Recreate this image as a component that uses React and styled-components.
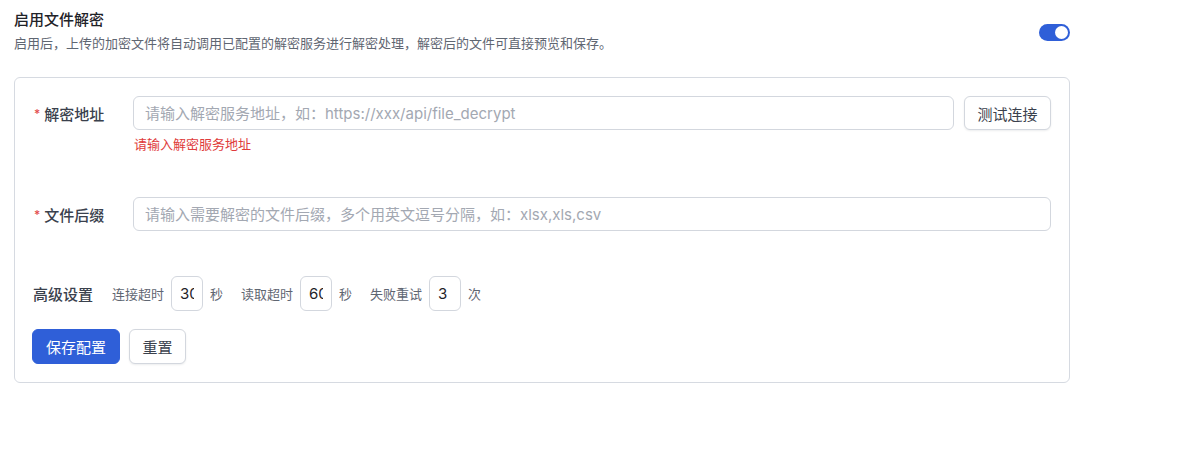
import React, { useState } from 'react';
import styled, { createGlobalStyle } from 'styled-components';

const GlobalStyle = createGlobalStyle`
  body {
    margin: 0;
    background: #ffffff;
    font-family: Inter, "Noto Sans CJK SC", sans-serif;
    color: #1f2329;
  }
  * { box-sizing: border-box; }
`;

const Page = styled.div`
  width: 1070px;
  padding: 9px 0 0 14px;
`;

const Header = styled.div`
  display: flex;
  align-items: center;
  justify-content: space-between;
`;

const Title = styled.div`
  font-size: 15px;
  line-height: 22px;
  font-weight: 500;
  color: #1f2329;
`;

const Desc = styled.div`
  margin-top: 2px;
  font-size: 13px;
  line-height: 20px;
  color: #5f6672;
`;

const Switch = styled.button`
  position: relative;
  width: 31px;
  height: 17px;
  margin-top: 2px;
  padding: 0;
  border: none;
  border-radius: 9px;
  background: ${(p) => (p.$on ? '#2f5fd8' : '#c9cdd4')};
  cursor: pointer;

  &::after {
    content: '';
    position: absolute;
    top: 2px;
    left: ${(p) => (p.$on ? '16px' : '2px')};
    width: 13px;
    height: 13px;
    border-radius: 50%;
    background: #ffffff;
  }
`;

const Card = styled.div`
  margin-top: 24px;
  border: 1px solid #d6dae1;
  border-radius: 6px;
  padding: 18px 18px 18px 17px;
  display: flex;
  flex-direction: column;
`;

const FormItem = styled.div`
  display: flex;
  align-items: flex-start;
  margin-bottom: ${(p) => p.$gap}px;
`;

const Label = styled.label`
  width: 101px;
  flex: none;
  height: 34px;
  display: flex;
  align-items: center;
  font-size: 15px;
  font-weight: 500;
  color: #3a414d;
`;

const Required = styled.span`
  color: #e34d4d;
  font-size: 12px;
  margin: 0 4px 0 2px;
`;

const Control = styled.div`
  flex: 1;
  min-width: 0;
  display: flex;
  flex-direction: column;
`;

const InputRow = styled.div`
  display: flex;
  gap: 10px;
`;

const TextInput = styled.input`
  flex: 1 1 auto;
  min-width: 0;
  height: 34px;
  padding: 0 11px;
  border: 1px solid #d3d7de;
  border-radius: 6px;
  font-family: inherit;
  font-size: 15px;
  color: #1f2329;
  outline: none;

  &::placeholder {
    color: #a3a8b2;
  }
`;

const ErrorText = styled.div`
  margin-top: 4px;
  padding-left: 1px;
  font-size: 13px;
  line-height: 20px;
  color: #e03b3b;
`;

const Button = styled.button`
  height: ${(p) => (p.$tall ? 34 : 35)}px;
  padding: 0 ${(p) => (p.$primary ? 13 : 12.5)}px;
  border-radius: 6px;
  font-family: inherit;
  font-size: 15px;
  cursor: pointer;
  border: 1px solid ${(p) => (p.$primary ? '#2f5fd8' : '#d3d7de')};
  background: ${(p) => (p.$primary ? '#2f5fd8' : '#ffffff')};
  color: ${(p) => (p.$primary ? '#ffffff' : '#3a414d')};
  box-shadow: ${(p) => (p.$primary ? 'none' : '0 1px 2px rgba(16, 24, 40, 0.08)')};
`;

const AdvancedRow = styled.div`
  display: flex;
  align-items: center;
  margin-bottom: 18px;
`;

const AdvancedTitle = styled.span`
  font-size: 15px;
  font-weight: 500;
  color: #3a414d;
  margin: 0 19px 0 1px;
`;

const Field = styled.div`
  display: flex;
  align-items: center;
  gap: 7px;
  margin-right: 18px;
  font-size: 13px;
  color: #5f6672;
`;

const SmallInput = styled.input`
  width: 32px;
  height: 35px;
  padding: 0 8px;
  border: 1px solid #d3d7de;
  border-radius: 6px;
  font-family: inherit;
  font-size: 15px;
  color: #1f2329;
  outline: none;
`;

const Actions = styled.div`
  display: flex;
  gap: 9px;
`;

const timeouts = [
  { label: '连接超时', value: '30', unit: '秒' },
  { label: '读取超时', value: '60', unit: '秒' },
  { label: '失败重试', value: '3', unit: '次' },
];

export default function App() {
  const [enabled, setEnabled] = useState(true);

  return (
    <Page>
      <GlobalStyle />
      <Header>
        <div>
          <Title>启用文件解密</Title>
          <Desc>启用后，上传的加密文件将自动调用已配置的解密服务进行解密处理，解密后的文件可直接预览和保存。</Desc>
        </div>
        <Switch $on={enabled} onClick={() => setEnabled(!enabled)} aria-label="启用文件解密" />
      </Header>

      <Card>
        <FormItem $gap={43}>
          <Label>
            <Required>*</Required>解密地址
          </Label>
          <Control>
            <InputRow>
              <TextInput placeholder="请输入解密服务地址，如：https://xxx/api/file_decrypt" />
              <Button $tall>测试连接</Button>
            </InputRow>
            <ErrorText>请输入解密服务地址</ErrorText>
          </Control>
        </FormItem>

        <FormItem $gap={45}>
          <Label>
            <Required>*</Required>文件后缀
          </Label>
          <Control>
            <TextInput placeholder="请输入需要解密的文件后缀，多个用英文逗号分隔，如：xlsx,xls,csv" />
          </Control>
        </FormItem>

        <AdvancedRow>
          <AdvancedTitle>高级设置</AdvancedTitle>
          {timeouts.map((t) => (
            <Field key={t.label}>
              <span>{t.label}</span>
              <SmallInput defaultValue={t.value} />
              <span>{t.unit}</span>
            </Field>
          ))}
        </AdvancedRow>

        <Actions>
          <Button $primary>保存配置</Button>
          <Button>重置</Button>
        </Actions>
      </Card>
    </Page>
  );
}
